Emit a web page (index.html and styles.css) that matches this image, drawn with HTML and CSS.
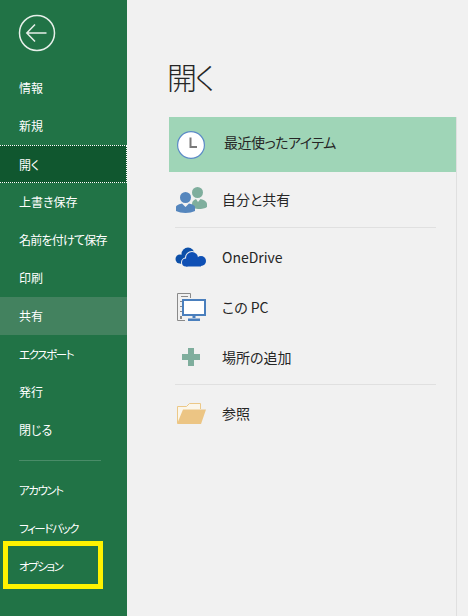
FILE: index.html
```html
<!DOCTYPE html>
<html lang="ja">
<head>
<meta charset="utf-8">
<title>開く</title>
<link rel="stylesheet" href="styles.css">
</head>
<body>
<div class="app">
  <nav class="side">
    <div class="back">
      <svg width="38" height="38" viewBox="0 0 38 38" fill="none" stroke="#e6efe9" stroke-width="1.5">
        <circle cx="19" cy="19" r="17.5"/>
        <path d="M28.500 19H9M17 10.500 8.800 19l8.200 8.500"/>
      </svg>
    </div>
    <ul class="menu">
      <li class="item">情報</li>
      <li class="item">新規</li>
      <li class="item current">開く</li>
      <li class="item">上書き保存</li>
      <li class="item tight">名前を付けて保存</li>
      <li class="item">印刷</li>
      <li class="item hover">共有</li>
      <li class="item kana">エクスポート</li>
      <li class="item">発行</li>
      <li class="item">閉じる</li>
    </ul>
    <div class="rule"></div>
    <ul class="menu">
      <li class="item kana">アカウント</li>
      <li class="item kana">フィードバック</li>
      <li class="item kana">オプション</li>
    </ul>
    <div class="mark"></div>
  </nav>
  <main class="main">
    <h1 class="title">開く</h1>
    <div class="list">
      <div class="row selected">
        <svg class="ico" width="28" height="28" viewBox="0 0 28 28">
          <circle cx="14" cy="14" r="13.400" fill="#fff" stroke="#5b8ac6" stroke-width="1.200"/>
          <path d="M13.500 6.500V16H20" fill="none" stroke="#7a7a7a" stroke-width="2"/>
        </svg>
        <span class="label">最近使ったアイテム</span>
      </div>
      <div class="row r-shared">
        <svg class="ico" width="31" height="26" viewBox="0 0 31 26">
          <circle cx="21.500" cy="5.500" r="5.500" fill="#7fae9d"/>
          <path d="M16 21v-4c0-3 2-4 4-5l2 3 2.500-3c2 .5 6.500 2 6.500 5v3c-2 1.500-5 2-9 2z" fill="#7fae9d"/>
          <circle cx="9.500" cy="10.500" r="5.500" fill="#5586bd"/>
          <path d="M0 24v-4c0-2 4-3 6-3.500l3.500 3.500 3.500-3.500c2 .5 6 1.500 6 3.500v4c-5 2.500-14 2.500-19 0z" fill="#5586bd"/>
        </svg>
        <span class="label">自分と共有</span>
      </div>
      <div class="sep"></div>
      <div class="row r-drive">
        <svg class="ico" width="32" height="20" viewBox="0 0 32 20">
          <g fill="#0c4fa8">
            <circle cx="13" cy="7" r="6.500"/>
            <circle cx="5" cy="12" r="4.500"/>
            <rect x="5" y="9" width="16" height="7.500"/>
          </g>
          <g fill="#0f50b5" stroke="#f1f1f1" stroke-width="2">
            <circle cx="17" cy="11" r="6"/>
            <circle cx="26" cy="14" r="5"/>
            <circle cx="11" cy="15.500" r="4"/>
            <rect x="11" y="12" width="15" height="7.500"/>
          </g>
          <g fill="#0f50b5">
            <circle cx="17" cy="11" r="6"/>
            <circle cx="26" cy="14" r="5"/>
            <circle cx="11" cy="15.500" r="4"/>
            <rect x="11" y="12" width="15" height="7.500"/>
          </g>
        </svg>
        <span class="label">OneDrive</span>
      </div>
      <div class="row r-pc">
        <svg class="ico" width="29" height="28" viewBox="0 0 29 28">
          <path d="M.5 27.500V.5h13V5M.5 27.500H8" fill="none" stroke="#8a8a8a"/>
          <path d="M4 3.500h7M3 8.500h3M3 13.500h3M3 18.500h3" stroke="#8a8a8a" fill="none"/>
          <rect x="3" y="23" width="2" height="3" fill="#8a8a8a"/>
          <rect x="6" y="7" width="22" height="15" fill="#fff" stroke="#4a7fbd" stroke-width="2"/>
          <path d="M15.500 22h3v3h-3zM11 25.500h12V28H11z" fill="#4a7fbd"/>
        </svg>
        <span class="label">この PC</span>
      </div>
      <div class="row r-add">
        <svg class="ico" width="18" height="18" viewBox="0 0 18 18">
          <path d="M6 0h6v6h6v6h-6v6H6v-6H0V6h6z" fill="#7fae9d"/>
        </svg>
        <span class="label">場所の追加</span>
      </div>
      <div class="sep"></div>
      <div class="row r-browse">
        <svg class="ico" width="29" height="21" viewBox="0 0 29 21">
          <path d="M.5 20V3.500h9l3-3h11V6" fill="#fbf6ea" stroke="#ecc887"/>
          <path d="M6 6.500h23L24 21H0z" fill="#ecc584"/>
        </svg>
        <span class="label">参照</span>
      </div>
    </div>
  </main>
</div>
</body>
</html>
```
FILE: styles.css
```css
* { box-sizing: border-box; }
html, body { margin: 0; padding: 0; }
body {
  width: 468px;
  height: 616px;
  overflow: hidden;
  font-family: "Noto Sans CJK JP", "Noto Sans", sans-serif;
  font-feature-settings: "palt";
  background: #f1f1f1;
}
.app { display: flex; height: 616px; }
.side {
  position: relative;
  width: 127px;
  flex: none;
  background: #217346;
  color: #fff;
}
.back { height: 69px; padding: 14px 0 0 18px; }
.back svg { display: block; }
.menu { list-style: none; margin: 0; padding: 0; }
.item {
  height: 38px;
  line-height: 38px;
  padding-left: 19px;
  font-size: 12px;
  white-space: nowrap;
}
.tight { letter-spacing: -.75px; }
.kana { font-size: 11.500px; letter-spacing: -1.400px; }
.current {
  background: #10572f;
  border-top: 1px dotted #fff;
  border-bottom: 1px dotted #fff;
  border-right: 1px dotted #fff;
  line-height: 37px;
}
.hover { background: #43825f; }
.rule { height: 1px; margin: 11px 26px 10px 19px; background: #4a8c68; }
.mark {
  position: absolute;
  left: 3px;
  top: 541px;
  width: 100px;
  height: 48px;
  border: 5px solid #fff200;
}
.main { flex: 1; padding: 0 0 0 42px; color: #262626; }
.title {
  margin: 0 0 0 -2px;
  height: 117px;
  padding-top: 53px;
  font-size: 30px;
  line-height: 46px;
  font-weight: 300;
  letter-spacing: -2px;
  color: #262626;
}
.list { border-right: 1px solid #e0e0e0; width: 288px; height: 499px; }
.row { display: flex; align-items: center; font-size: 14px; }
.ico { flex: none; display: block; }
.label { white-space: nowrap; }
.selected { height: 55px; background: #9fd5b7; padding-left: 8px; }
.selected .label { margin: 0 0 6px 19px; letter-spacing: -.5px; }
.r-shared { height: 55px; padding-left: 7px; }
.r-shared .label { margin: 0 0 2px 15px; }
.r-drive { height: 57px; padding-left: 6px; }
.r-drive .label { margin-left: 15px; }
.r-pc { height: 44px; padding-left: 8px; }
.r-pc .label { margin-left: 16px; }
.r-add { height: 55px; padding-left: 13px; }
.r-add .label { margin-left: 22px; }
.r-browse { height: 57px; padding-left: 8px; }
.r-browse .label { margin: 0 0 2px 16px; }
.sep { height: 1px; margin: 0 20px 0 6px; background: #e0e0e0; }
```
